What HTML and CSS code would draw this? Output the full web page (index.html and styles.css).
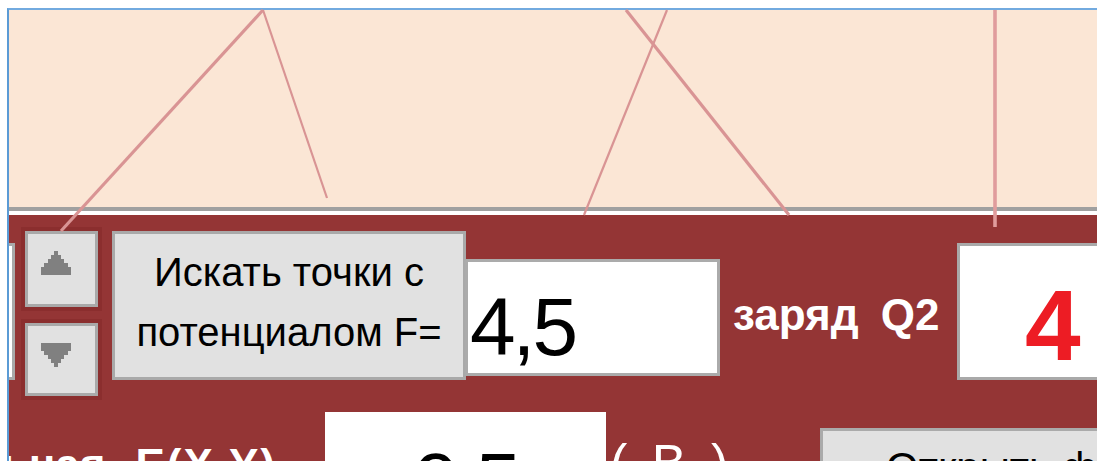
FILE: index.html
```html
<!DOCTYPE html>
<html lang="ru">
<head>
<meta charset="utf-8">
<title>Эквипотенциальные линии</title>
<link rel="stylesheet" href="styles.css">
</head>
<body>
<div class="window">
  <div class="plot"></div>
  <div class="panel">
    <div class="row row-top">
      <div class="stub"></div>
      <div class="spin">
        <div class="spin-frame spin-frame-up">
          <div class="spin-btn" role="button" aria-label="вверх">
            <svg class="arrow" width="30" height="24" viewBox="0 0 9 6" preserveAspectRatio="none" shape-rendering="crispEdges">
              <polygon points="4,0 5,0 5,1 6,1 6,2 7,2 7,3 8,3 8,4 9,4 9,6 0,6 0,4 1,4 1,3 2,3 2,2 3,2 3,1 4,1"/>
            </svg>
          </div>
        </div>
        <div class="spin-frame spin-frame-down">
          <div class="spin-btn" role="button" aria-label="вниз">
            <svg class="arrow" width="30" height="24" viewBox="0 0 9 6" preserveAspectRatio="none" shape-rendering="crispEdges">
              <polygon points="0,0 9,0 9,2 8,2 8,3 7,3 7,4 6,4 6,5 5,5 5,6 4,6 4,5 3,5 3,4 2,4 2,3 1,3 1,2 0,2"/>
            </svg>
          </div>
        </div>
      </div>
      <div class="find-btn" role="button">Искать точки с<br>потенциалом F=</div>
      <div class="value-box">4,5</div>
      <div class="charge-label"><span>заряд</span><span class="charge-name">Q2</span></div>
      <div class="charge-box">4</div>
    </div>
    <div class="row row-bottom">
      <div class="field-label"><span class="field-word">Потенциальная</span><span class="field-fn">E(X,Y)</span></div>
      <div class="result-box">0,5</div>
      <div class="unit">( В )</div>
      <div class="open-btn" role="button">Открыть файл</div>
    </div>
  </div>
</div>
<svg class="plot-lines" width="1097" height="240" viewBox="0 0 1097 240">
  <line x1="263" y1="10" x2="61" y2="231" stroke-width="3.2"/>
  <line x1="263" y1="10" x2="327" y2="198" stroke-width="2.2"/>
  <line x1="626" y1="10" x2="789" y2="215" stroke-width="3.2"/>
  <line x1="667" y1="10" x2="584" y2="215" stroke-width="2.2"/>
  <line class="vline" x1="995" y1="10" x2="995" y2="227" stroke-width="3.6"/>
</svg>
</body>
</html>
```
FILE: styles.css
```css
* {
  box-sizing: border-box;
}

html, body {
  margin: 0;
  width: 1097px;
  height: 461px;
  overflow: hidden;
  background: #ffffff;
}

body {
  position: relative;
  font-family: "Liberation Sans", Arial, sans-serif;
}

.window {
  margin: 8px 0 0 7px;
  border-left: 2px solid #5b9bd5;
  border-top: 2px solid #72aadf;
  height: 453px;
  display: flex;
  flex-direction: column;
}

/* drawing area */
.plot {
  height: 201px;
  flex-shrink: 0;
  background: #fbe6d5;
  border-bottom: 4px solid #a0a0a0;
}

.panel {
  flex: 1;
  background: #943535;
  border-top: 4px solid #ffffff;
  padding-top: 12px;
  overflow: hidden;
}

.row {
  display: flex;
  align-items: flex-start;
}

.row > * {
  flex-shrink: 0;
}

/* top row */
.stub {
  width: 6px;
  height: 137px;
  margin-top: 16px;
  background: #ffffff;
  border: 3px solid #a9a9a9;
  border-left: none;
}

.spin {
  margin-left: 6px;
  display: flex;
  flex-direction: column;
  gap: 8px;
}

.spin-frame {
  width: 81px;
  border: 4px solid #8b2e2e;
}

.spin-frame-up {
  height: 84px;
}

.spin-frame-down {
  height: 81px;
}

.spin-btn {
  width: 73px;
  height: 100%;
  padding: 17px 0 0 13px;
  background: #e1e1e1;
  border: 3px solid #a9a9a9;
}

.arrow {
  display: block;
  fill: #808080;
}

.find-btn {
  width: 354px;
  height: 149px;
  margin: 4px 0 0 10px;
  padding: 0 0 7px 0;
  border: 3px solid #a9a9a9;
  background: #e1e1e1;
  color: #000000;
  font-size: 40px;
  line-height: 60px;
  text-align: center;
  display: flex;
  align-items: center;
  justify-content: center;
}

.value-box {
  width: 255px;
  height: 117px;
  margin: 32px 0 0 -1px;
  padding: 19px 0 0 2px;
  border: 3px solid #ababab;
  background: #ffffff;
  color: #000000;
  font-size: 82px;
  line-height: 92px;
  letter-spacing: -3px;
}

.charge-label {
  width: 224px;
  margin: 63px 0 0 13px;
  color: #ffffff;
  font-weight: bold;
  font-size: 44px;
  line-height: 49px;
  white-space: nowrap;
}

.charge-name {
  margin-left: 22px;
}

.charge-box {
  width: 160px;
  height: 137px;
  margin-top: 16px;
  padding: 29px 0 0 65px;
  border: 3px solid #a9a9a9;
  background: #ffffff;
  color: #ed1c24;
  font-weight: bold;
  font-size: 100px;
  line-height: 100px;
}

/* bottom row */
.field-label {
  width: 316px;
  margin-top: 40px;
  padding-right: 48px;
  display: flex;
  justify-content: flex-end;
  overflow: hidden;
  white-space: nowrap;
  color: #ffffff;
  font-weight: bold;
  font-size: 44px;
  line-height: 49px;
}

.field-label > span {
  flex-shrink: 0;
}

.field-fn {
  margin-left: 30px;
  letter-spacing: 2px;
}

.result-box {
  width: 281px;
  height: 120px;
  margin-top: 12px;
  padding: 24px 0 0 88px;
  background: #ffffff;
  color: #000000;
  font-size: 82px;
  line-height: 92px;
  letter-spacing: -3px;
}

.unit {
  width: 214px;
  margin-top: 34px;
  padding-left: 4px;
  color: #ffffff;
  font-size: 52px;
  line-height: 58px;
  word-spacing: 10px;
  white-space: pre;
}

.open-btn {
  width: 300px;
  height: 100px;
  margin-top: 28px;
  padding: 13px 0 0 63px;
  border: 3px solid #aaaaaa;
  background: #e1e1e1;
  color: #000000;
  font-size: 42px;
  line-height: 47px;
  white-space: nowrap;
}

/* equipotential lines drawn over the plot */
.plot-lines {
  position: absolute;
  top: 0;
  left: 0;
  pointer-events: none;
  stroke: #d99494;
  stroke-linecap: butt;
}

.plot-lines .vline {
  stroke: #e09c9c;
}
```
